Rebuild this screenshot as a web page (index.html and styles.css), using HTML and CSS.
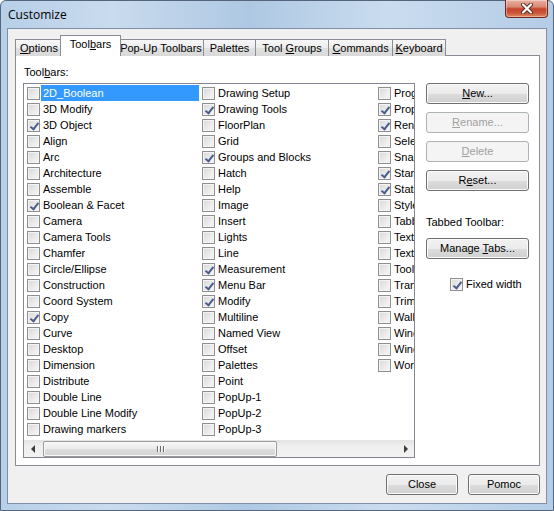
FILE: index.html
```html
<!DOCTYPE html>
<html>
<head>
<meta charset="utf-8">
<link rel="stylesheet" href="styles.css">
</head>
<body>
<div class="window">
  <div class="titlebar">
    <span class="title">Customize</span>
    <div class="close-btn">
      <svg width="14" height="11" viewBox="0 0 14 11">
        <path d="M3 1.5 L11 9.5 M11 1.5 L3 9.5" stroke="#5a2a20" stroke-width="4" stroke-linecap="round"/>
        <path d="M3 1.5 L11 9.5 M11 1.5 L3 9.5" stroke="#ffffff" stroke-width="2.2" stroke-linecap="round"/>
      </svg>
    </div>
  </div>
  <div class="client">
    <div class="tabs">
      <div class="tab t-options"><u>O</u>ptions</div>
      <div class="tab active t-toolbars">Tool<u>b</u>ars</div>
      <div class="tab t-popup">Pop-Up Toolbars</div>
      <div class="tab t-palettes">Palettes</div>
      <div class="tab t-groups">Tool <u>G</u>roups</div>
      <div class="tab t-commands"><u>C</u>ommands</div>
      <div class="tab t-keyboard"><u>K</u>eyboard</div>
    </div>
    <div class="panel">
      <div class="left">
        <div class="label">Tool<u>b</u>ars:</div>
        <div class="listbox">
          <div class="cols">
            <div class="col">
              <div class="item"><span class="cb"></span><span class="txt sel">2D_Boolean</span></div>
              <div class="item"><span class="cb"></span><span class="txt">3D Modify</span></div>
              <div class="item"><span class="cb on"></span><span class="txt">3D Object</span></div>
              <div class="item"><span class="cb"></span><span class="txt">Align</span></div>
              <div class="item"><span class="cb"></span><span class="txt">Arc</span></div>
              <div class="item"><span class="cb"></span><span class="txt">Architecture</span></div>
              <div class="item"><span class="cb"></span><span class="txt">Assemble</span></div>
              <div class="item"><span class="cb on"></span><span class="txt">Boolean &amp; Facet</span></div>
              <div class="item"><span class="cb"></span><span class="txt">Camera</span></div>
              <div class="item"><span class="cb"></span><span class="txt">Camera Tools</span></div>
              <div class="item"><span class="cb"></span><span class="txt">Chamfer</span></div>
              <div class="item"><span class="cb"></span><span class="txt">Circle/Ellipse</span></div>
              <div class="item"><span class="cb"></span><span class="txt">Construction</span></div>
              <div class="item"><span class="cb"></span><span class="txt">Coord System</span></div>
              <div class="item"><span class="cb on"></span><span class="txt">Copy</span></div>
              <div class="item"><span class="cb"></span><span class="txt">Curve</span></div>
              <div class="item"><span class="cb"></span><span class="txt">Desktop</span></div>
              <div class="item"><span class="cb"></span><span class="txt">Dimension</span></div>
              <div class="item"><span class="cb"></span><span class="txt">Distribute</span></div>
              <div class="item"><span class="cb"></span><span class="txt">Double Line</span></div>
              <div class="item"><span class="cb"></span><span class="txt">Double Line Modify</span></div>
              <div class="item"><span class="cb"></span><span class="txt">Drawing markers</span></div>
            </div>
            <div class="col">
              <div class="item"><span class="cb"></span><span class="txt">Drawing Setup</span></div>
              <div class="item"><span class="cb on"></span><span class="txt">Drawing Tools</span></div>
              <div class="item"><span class="cb"></span><span class="txt">FloorPlan</span></div>
              <div class="item"><span class="cb"></span><span class="txt">Grid</span></div>
              <div class="item"><span class="cb on"></span><span class="txt">Groups and Blocks</span></div>
              <div class="item"><span class="cb"></span><span class="txt">Hatch</span></div>
              <div class="item"><span class="cb"></span><span class="txt">Help</span></div>
              <div class="item"><span class="cb"></span><span class="txt">Image</span></div>
              <div class="item"><span class="cb"></span><span class="txt">Insert</span></div>
              <div class="item"><span class="cb"></span><span class="txt">Lights</span></div>
              <div class="item"><span class="cb"></span><span class="txt">Line</span></div>
              <div class="item"><span class="cb on"></span><span class="txt">Measurement</span></div>
              <div class="item"><span class="cb on"></span><span class="txt">Menu Bar</span></div>
              <div class="item"><span class="cb on"></span><span class="txt">Modify</span></div>
              <div class="item"><span class="cb"></span><span class="txt">Multiline</span></div>
              <div class="item"><span class="cb"></span><span class="txt">Named View</span></div>
              <div class="item"><span class="cb"></span><span class="txt">Offset</span></div>
              <div class="item"><span class="cb"></span><span class="txt">Palettes</span></div>
              <div class="item"><span class="cb"></span><span class="txt">Point</span></div>
              <div class="item"><span class="cb"></span><span class="txt">PopUp-1</span></div>
              <div class="item"><span class="cb"></span><span class="txt">PopUp-2</span></div>
              <div class="item"><span class="cb"></span><span class="txt">PopUp-3</span></div>
            </div>
            <div class="col">
              <div class="item"><span class="cb"></span><span class="txt">Program</span></div>
              <div class="item"><span class="cb on"></span><span class="txt">Properties</span></div>
              <div class="item"><span class="cb on"></span><span class="txt">Render</span></div>
              <div class="item"><span class="cb"></span><span class="txt">Selection</span></div>
              <div class="item"><span class="cb"></span><span class="txt">Snaps</span></div>
              <div class="item"><span class="cb on"></span><span class="txt">Standard</span></div>
              <div class="item"><span class="cb on"></span><span class="txt">Status Bar</span></div>
              <div class="item"><span class="cb"></span><span class="txt">Styles</span></div>
              <div class="item"><span class="cb"></span><span class="txt">Tabbed</span></div>
              <div class="item"><span class="cb"></span><span class="txt">Text</span></div>
              <div class="item"><span class="cb"></span><span class="txt">Text Styles</span></div>
              <div class="item"><span class="cb"></span><span class="txt">Tools</span></div>
              <div class="item"><span class="cb"></span><span class="txt">Transform</span></div>
              <div class="item"><span class="cb"></span><span class="txt">Trim</span></div>
              <div class="item"><span class="cb"></span><span class="txt">Walls</span></div>
              <div class="item"><span class="cb"></span><span class="txt">Window</span></div>
              <div class="item"><span class="cb"></span><span class="txt">Windows</span></div>
              <div class="item"><span class="cb"></span><span class="txt">Workspace</span></div>
            </div>
          </div>
          <div class="hscroll">
            <div class="sb-arrow"><span class="tri-left"></span></div>
            <div class="sb-track">
              <div class="sb-thumb"><span class="grip"></span><span class="grip"></span><span class="grip"></span></div>
            </div>
            <div class="sb-arrow"><span class="tri-right"></span></div>
          </div>
        </div>
      </div>
      <div class="right">
        <div class="btn side"><span><u>N</u>ew...</span></div>
        <div class="btn side disabled"><span><u>R</u>ename...</span></div>
        <div class="btn side disabled"><span><u>D</u>elete</span></div>
        <div class="btn side"><span>R<u>e</u>set...</span></div>
        <div class="tabbed-label">Tabbed Toolbar:</div>
        <div class="btn side"><span>Manage <u>T</u>abs...</span></div>
        <div class="fixed"><span class="cb on"></span><span>Fixed width</span></div>
      </div>
    </div>
    <div class="footer">
      <div class="btn foot"><span>Close</span></div>
      <div class="btn foot"><span>Pomoc</span></div>
    </div>
  </div>
</div>
</body>
</html>
```

FILE: styles.css
```css
* { box-sizing: border-box; }

html, body {
  margin: 0;
  padding: 0;
  background: #ffffff;
}

body {
  font-family: "Liberation Sans", Arial, sans-serif;
  font-size: 11px;
  color: #000;
}

.window {
  width: 554px;
  height: 511px;
  display: flex;
  flex-direction: column;
  padding: 0 6px 6px 6px;
  border: 1px solid #55667c;
  border-radius: 6px 6px 0 0;
  background: linear-gradient(90deg, #b7cfe8 0%, #c9dbee 20%, #aec8e3 45%, #cadcef 70%, #b4cce6 100%);
}

.titlebar {
  height: 27px;
  display: flex;
  align-items: flex-start;
  justify-content: space-between;
}

.title {
  font-family: "Open Sans", "Noto Sans", sans-serif;
  font-size: 12px;
  line-height: 14px;
  margin-top: 7px;
  padding-left: 1px;
  color: #000;
}

.close-btn {
  width: 43px;
  height: 18px;
  margin-top: -1px;
  margin-right: -1px;
  border: 1px solid #6b2b1e;
  border-top: none;
  border-radius: 0 0 4px 4px;
  background: linear-gradient(180deg, #e9b0a2 0%, #d98a76 40%, #c4452c 52%, #c9553a 75%, #e08a62 100%);
  display: flex;
  align-items: center;
  justify-content: center;
  box-shadow: inset 0 0 0 1px rgba(255, 255, 255, 0.35);
}

.client {
  flex: 1;
  display: flex;
  flex-direction: column;
  background: #f0f0f0;
  border: 1px solid #7d90a8;
  padding: 0 6px 0 7px;
}

.tabs {
  display: flex;
  align-items: flex-end;
  height: 21px;
  margin-top: 6px;
  margin-bottom: -1px;
  position: relative;
  z-index: 1;
}

.tab {
  height: 17px;
  border: 1px solid #898c95;
  border-bottom: none;
  margin-left: -1px;
  background: linear-gradient(180deg, #f7f7f7 0%, #ececec 50%, #e0e0e0 51%, #d9d9d9 100%);
  text-align: center;
  line-height: 16px;
  white-space: nowrap;
}

.tab:first-child { margin-left: 0; }

.tab.active {
  height: 21px;
  background: #ffffff;
  margin-left: -3px;
  margin-right: -2px;
  line-height: 17px;
  position: relative;
  z-index: 2;
}

.t-options { width: 48px; }
.t-toolbars { width: 61px; }
.t-popup { width: 86px; }
.t-palettes { width: 53px; }
.t-groups { width: 74px; }
.t-commands { width: 65px; }
.t-keyboard { width: 54px; }

.panel {
  height: 411px;
  border: 1px solid #898c95;
  background: #ffffff;
  display: flex;
  padding: 10px 0 0 7px;
}

.left {
  display: flex;
  flex-direction: column;
}

.label {
  height: 13px;
  line-height: 13px;
  margin-left: 1px;
  margin-bottom: 4px;
}

.listbox {
  width: 392px;
  height: 375px;
  border: 1px solid #828790;
  background: #fff;
  display: flex;
  flex-direction: column;
  padding-top: 1px;
}

.cols {
  display: flex;
  overflow: hidden;
}

.col {
  flex: 0 0 176px;
  display: flex;
  flex-direction: column;
}

.col:first-child { flex-basis: 175px; }

.item {
  height: 16px;
  display: flex;
  align-items: center;
  padding-left: 3px;
  white-space: nowrap;
}

.cb {
  flex: 0 0 13px;
  width: 13px;
  height: 13px;
  margin-top: 1px;
  border: 1px solid #8f8f8f;
  background: linear-gradient(135deg, #d8d8d8 0%, #ececec 60%, #f8f8f8 100%);
  box-shadow: inset 0 0 0 1px #f4f4f4;
  position: relative;
}

.cb.on::after {
  content: "";
  position: absolute;
  left: 3.5px;
  top: 1px;
  width: 3px;
  height: 7px;
  border-right: 2px solid #4a5c8c;
  border-bottom: 2px solid #4a5c8c;
  transform: rotate(38deg);
}

.txt {
  flex: 1;
  height: 16px;
  line-height: 16px;
  margin-left: 1px;
  padding-left: 2px;
}

.txt.sel {
  background: #3399ff;
  color: #ffffff;
}

.hscroll {
  margin-top: auto;
  height: 17px;
  display: flex;
  background: linear-gradient(180deg, #e4e4e4 0%, #efefef 40%, #f2f2f2 100%);
}

.sb-arrow {
  flex: 0 0 17px;
  display: flex;
  align-items: center;
  justify-content: center;
}

.tri-left {
  width: 0;
  height: 0;
  border-top: 4px solid transparent;
  border-bottom: 4px solid transparent;
  border-right: 4px solid #3c3c3c;
}

.tri-right {
  width: 0;
  height: 0;
  border-top: 4px solid transparent;
  border-bottom: 4px solid transparent;
  border-left: 4px solid #3c3c3c;
}

.sb-track {
  flex: 1;
  display: flex;
  align-items: center;
}

.sb-thumb {
  width: 234px;
  height: 16px;
  margin-left: 2px;
  border: 1px solid #9a9a9a;
  border-radius: 2px;
  background: linear-gradient(180deg, #f6f6f6 0%, #ebebeb 50%, #dddddd 51%, #d4d4d4 100%);
  box-shadow: inset 0 0 0 1px #fafafa;
  display: flex;
  align-items: center;
  justify-content: center;
  gap: 2px;
}

.grip {
  width: 1px;
  height: 6px;
  background: #6b6b6b;
  box-shadow: 1px 0 0 #ffffff;
}

.right {
  display: flex;
  flex-direction: column;
  align-items: flex-start;
  padding-top: 17px;
  margin-left: 11px;
}

.btn {
  height: 21px;
  border: 1px solid #707070;
  border-radius: 3px;
  background: linear-gradient(180deg, #f2f2f2 0%, #ebebeb 50%, #dddddd 51%, #cfcfcf 100%);
  box-shadow: inset 0 0 0 1px #fbfbfb;
  display: flex;
  align-items: center;
  justify-content: center;
  line-height: 13px;
  white-space: nowrap;
}

.btn.side {
  width: 103px;
  margin-bottom: 8px;
}

.btn.disabled {
  border-color: #adb2b5;
  background: #f4f4f4;
  box-shadow: none;
  color: #a0a0a0;
}

.tabbed-label {
  margin-top: 17px;
  margin-bottom: 9px;
  height: 13px;
  line-height: 13px;
}

.fixed {
  display: flex;
  align-items: center;
  margin-top: 10px;
  margin-left: 24px;
  height: 14px;
  gap: 3px;
}

.fixed .cb { margin-top: 0; }

.footer {
  display: flex;
  justify-content: flex-end;
  gap: 10px;
  margin-top: 8px;
}

.btn.foot {
  width: 72px;
}
```
